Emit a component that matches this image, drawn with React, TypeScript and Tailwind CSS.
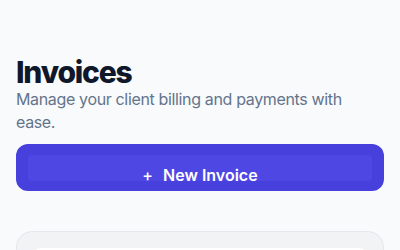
export default function App() {
  return (
    <div
      className="min-h-screen bg-[#f8fafc] px-4 pt-14 pb-8"
      style={{ fontFamily: "Inter, 'Noto Sans', sans-serif" }}
    >
      <header>
        <h1 className="text-[30px] font-extrabold leading-[32px] tracking-[-0.04em] text-[#0f172a]">
          Invoices
        </h1>
        <p className="text-base leading-[23px] tracking-[-0.35px] text-[#64748b]">
          Manage your client billing and payments with ease.
        </p>
      </header>

      <button className="mt-[10px] flex w-full flex-col rounded-xl bg-[#4840dc] px-3 pt-[11px] pb-[10px] text-white">
        <span className="flex h-[26px] w-full items-start justify-center gap-2.5 rounded-sm bg-[#4e47e4] pt-2 text-base font-semibold leading-6">
          <span className="font-medium">+</span>
          <span>New Invoice</span>
        </span>
      </button>

      <section className="mt-10 rounded-2xl border border-[#e5e7eb] bg-[#f2f3f5] p-4">
        <div className="h-24 rounded-lg bg-white" />
      </section>
    </div>
  );
}
